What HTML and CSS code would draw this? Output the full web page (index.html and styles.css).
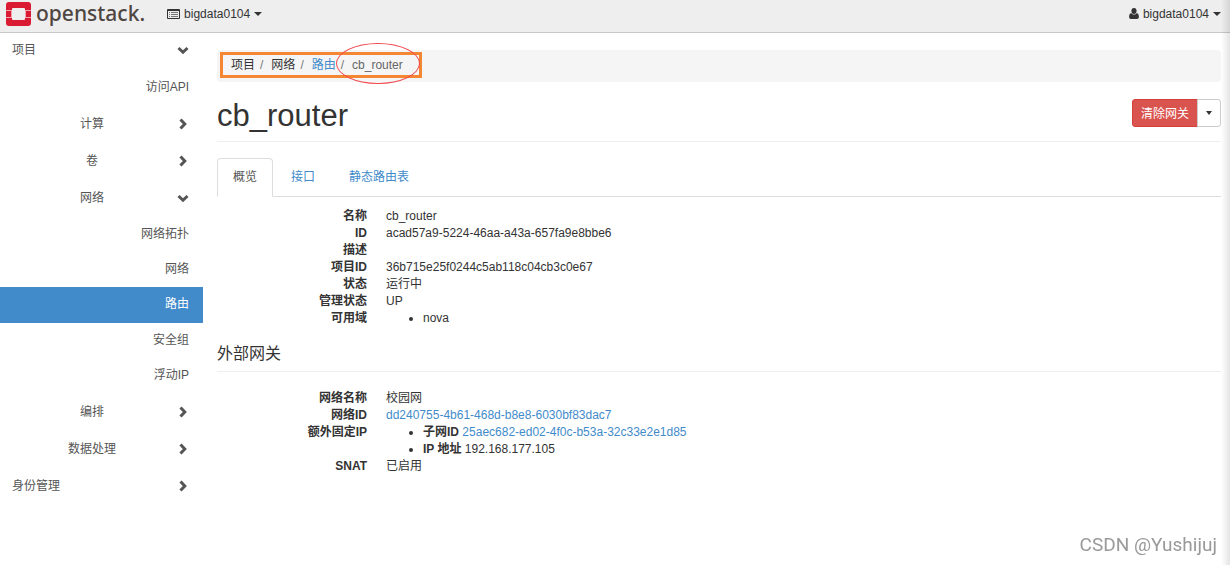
FILE: index.html
```
<!DOCTYPE html>
<html lang="zh-CN">
<head>
    <meta charset="UTF-8">
    <meta name="viewport" content="width=device-width, initial-scale=1.0">
    <title>cb_router - OpenStack Dashboard</title>
    <link rel="stylesheet" href="styles.css">
</head>
<body>
    <header class="topbar">
        <a class="brand" href="#">
            <svg class="brand-mark" viewBox="0 0 25 24" aria-hidden="true">
                <path fill="#da1a32" d="M3 0h19a3 3 0 0 1 3 3v5h-6V7a1 1 0 0 0-1-1H7a1 1 0 0 0-1 1v1H0V3a3 3 0 0 1 3-3z"/>
                <path fill="#da1a32" d="M0 16h6v1a1 1 0 0 0 1 1h11a1 1 0 0 0 1-1v-1h6v5a3 3 0 0 1-3 3H3a3 3 0 0 1-3-3z"/>
                <path fill="#da1a32" d="M0 9h6v6H0zM19 9h6v6h-6z"/>
                <path fill="#f3a3ae" d="M5 9h1v6H5zM19 9h1v6h-1zM0 8h6v1H0zM19 8h6v1h-6zM0 15h6v1H0zM19 15h6v1h-6z"/>
            </svg>
            <span class="brand-name">openstack.</span>
        </a>
        <button class="menu-button" type="button">
            <svg class="icon-list" viewBox="0 0 13 10" aria-hidden="true">
                <path fill="#333" fill-rule="evenodd" d="M1 0h11a1 1 0 0 1 1 1v8a1 1 0 0 1-1 1H1a1 1 0 0 1-1-1V1a1 1 0 0 1 1-1zM1 2v7h11V2z"/>
                <path fill="#777" d="M2 3h1v1H2zM4 3h7v1H4zM2 5h1v1H2zM4 5h7v1H4zM2 7h1v1H2zM4 7h7v1H4z"/>
            </svg>
            bigdata0104
            <span class="caret"></span>
        </button>
        <button class="menu-button user-menu" type="button">
            <svg class="icon-user" viewBox="0 0 10 11" aria-hidden="true">
                <path fill="#333" d="M5 0a2.600 2.900 0 0 1 2.600 2.900C7.600 4.700 6.500 6 5 6S2.400 4.700 2.400 2.900A2.600 2.900 0 0 1 5 0zM2.300 5C3 6 3.900 6.500 5 6.500S7 6 7.700 5C9.200 5.300 9.900 7 9.900 9c0 1.200-.8 2-1.800 2H1.900C.9 11 .1 10.200.1 9c0-2 .7-3.700 2.200-4z"/>
            </svg>
            bigdata0104
            <span class="caret"></span>
        </button>
    </header>

    <div class="layout">
        <nav class="sidebar">
            <a class="nav-root first" href="#"><span>项目</span>
                <svg class="chevron" viewBox="0 0 12 12"><path d="M1.500 4l4.500 4.300L10.500 4"/></svg></a>
            <div class="nav-leaves">
                <a href="#">访问API</a>
            </div>
            <a class="nav-group" href="#"><span>计算</span>
                <svg class="chevron" viewBox="0 0 12 12"><path d="M3.500 1.500L7.800 6 3.500 10.500"/></svg></a>
            <a class="nav-group" href="#"><span>卷</span>
                <svg class="chevron" viewBox="0 0 12 12"><path d="M3.500 1.500L7.800 6 3.500 10.500"/></svg></a>
            <a class="nav-group" href="#"><span>网络</span>
                <svg class="chevron" viewBox="0 0 12 12"><path d="M1.500 4l4.500 4.300L10.500 4"/></svg></a>
            <div class="nav-leaves">
                <a href="#">网络拓扑</a>
                <a href="#">网络</a>
                <a class="active" href="#">路由</a>
                <a href="#">安全组</a>
                <a href="#">浮动IP</a>
            </div>
            <a class="nav-group" href="#"><span>编排</span>
                <svg class="chevron" viewBox="0 0 12 12"><path d="M3.500 1.500L7.800 6 3.500 10.500"/></svg></a>
            <a class="nav-group" href="#"><span>数据处理</span>
                <svg class="chevron" viewBox="0 0 12 12"><path d="M3.500 1.500L7.800 6 3.500 10.500"/></svg></a>
            <a class="nav-root" href="#"><span>身份管理</span>
                <svg class="chevron" viewBox="0 0 12 12"><path d="M3.500 1.500L7.800 6 3.500 10.500"/></svg></a>
        </nav>

        <main class="content">
            <ol class="breadcrumb">
                <li>项目</li>
                <li>网络</li>
                <li><a href="#">路由</a></li>
                <li class="current">cb_router</li>
                <li class="mark-box" aria-hidden="true"></li>
                <li class="mark-ellipse" aria-hidden="true"></li>
            </ol>

            <div class="page-header">
                <h1>cb_router</h1>
                <div class="btn-group">
                    <button class="btn btn-danger" type="button">清除网关</button>
                    <button class="btn btn-toggle" type="button" aria-label="更多"><span class="caret small"></span></button>
                </div>
            </div>

            <div class="tabs">
                <a class="active" href="#">概览</a>
                <a href="#">接口</a>
                <a href="#">静态路由表</a>
            </div>

            <dl class="details">
                <dt>名称</dt>
                <dd>cb_router</dd>
                <dt>ID</dt>
                <dd>acad57a9-5224-46aa-a43a-657fa9e8bbe6</dd>
                <dt>描述</dt>
                <dd></dd>
                <dt>项目ID</dt>
                <dd>36b715e25f0244c5ab118c04cb3c0e67</dd>
                <dt>状态</dt>
                <dd>运行中</dd>
                <dt>管理状态</dt>
                <dd>UP</dd>
                <dt>可用域</dt>
                <dd>
                    <ul>
                        <li>nova</li>
                    </ul>
                </dd>
            </dl>

            <h4>外部网关</h4>
            <dl class="details">
                <dt>网络名称</dt>
                <dd>校园网</dd>
                <dt>网络ID</dt>
                <dd><a href="#">dd240755-4b61-468d-b8e8-6030bf83dac7</a></dd>
                <dt>额外固定IP</dt>
                <dd>
                    <ul>
                        <li><b>子网ID</b> <a href="#">25aec682-ed02-4f0c-b53a-32c33e2e1d85</a></li>
                        <li><b>IP 地址</b> 192.168.177.105</li>
                    </ul>
                </dd>
                <dt>SNAT</dt>
                <dd>已启用</dd>
            </dl>
        </main>
    </div>

    <div class="edge-shadow"></div>
    <div class="watermark">CSDN @Yushijuj</div>
</body>
</html>
```
FILE: styles.css
```
:root {
    --text: #333;
    --link: #428bca;
    --line: #ddd;
}
* {
    box-sizing: border-box;
}
body {
    margin: 0;
    min-height: 100vh;
    background: #fff;
    color: var(--text);
    font-family: "Liberation Sans", Arial, "Noto Sans CJK SC", sans-serif;
    font-size: 12px;
    line-height: 17px;
}
a {
    color: var(--link);
    text-decoration: none;
}
button {
    font-family: inherit;
    font-size: 12px;
    cursor: pointer;
}

/* top bar */
.topbar {
    display: flex;
    align-items: center;
    height: 33px;
    padding: 0 9px 5px 6px;
    background: #eee;
    border-bottom: 1px solid #c8c8c8;
}
.brand {
    display: flex;
    align-items: center;
    gap: 5px;
}
.brand-mark {
    width: 25px;
    height: 24px;
}
.brand-name {
    padding-bottom: 1px;
    color: #4f4642;
    font-family: "Noto Sans", "Open Sans", sans-serif;
    font-size: 21px;
    font-weight: 500;
    line-height: 26px;
}
.menu-button {
    display: flex;
    align-items: center;
    gap: 4px;
    margin-left: 22px;
    padding: 0;
    border: none;
    background: none;
    color: var(--text);
}
.user-menu {
    margin-left: auto;
}
.icon-list {
    width: 13px;
    height: 10px;
}
.icon-user {
    width: 10px;
    height: 11px;
}
.caret {
    border-top: 4px solid #333;
    border-left: 4px solid transparent;
    border-right: 4px solid transparent;
}
.caret.small {
    border-width: 4px 3px 0;
}

.layout {
    display: flex;
}

/* side navigation */
.sidebar {
    flex: 0 0 203px;
}
.sidebar a {
    color: #555;
    line-height: 18px;
}
.nav-root,
.nav-group {
    display: flex;
    align-items: center;
    gap: 5px;
    padding: 10px 14px 9px 12px;
}
.nav-root.first {
    padding: 8px 14px 10px 12px;
}
.nav-root span,
.nav-group span {
    flex: 1;
}
.nav-group span {
    text-align: center;
}
.chevron {
    width: 12px;
    height: 12px;
    fill: none;
    stroke: #555;
    stroke-width: 3;
}
.nav-leaves {
    padding-top: 1px;
}
.nav-leaves a {
    display: block;
    padding: 8px 14px 9px;
    text-align: right;
}
.nav-leaves a.active {
    padding-bottom: 10px;
    background: var(--link);
    color: #fff;
}

/* content */
.content {
    flex: 1;
    min-width: 0;
    padding: 17px 9px 0 14px;
}
.breadcrumb {
    position: relative;
    display: flex;
    height: 32px;
    margin: 0;
    padding: 7px 14px;
    border-radius: 4px;
    background: #f5f5f5;
    list-style: none;
}
.breadcrumb li + li:not([aria-hidden])::before {
    content: "/";
    padding: 0 8px 0 5px;
    color: #777;
}
.breadcrumb .current {
    color: #666;
}
/* hand-drawn marks over the breadcrumb */
.mark-box {
    position: absolute;
    left: 3px;
    top: 2px;
    width: 202px;
    height: 26px;
    border: 3px solid #f58634;
}
.mark-ellipse {
    position: absolute;
    left: 119px;
    top: -7px;
    width: 84px;
    height: 41px;
    border: 1px solid #f0484c;
    border-radius: 50%;
}

.page-header {
    display: flex;
    align-items: center;
    justify-content: space-between;
    height: 60px;
    border-bottom: 1px solid #eee;
}
h1 {
    margin: 8px 0 0;
    font-size: 31px;
    font-weight: normal;
    line-height: 34px;
}
.btn-group {
    display: flex;
    margin-top: 2px;
}
.btn {
    height: 28px;
    padding: 0 8px;
    border: 1px solid #ccc;
}
.btn-danger {
    border-color: #d43f3a;
    border-radius: 3px 0 0 3px;
    background: #d9534f;
    color: #fff;
}
.btn-toggle {
    display: flex;
    align-items: center;
    margin-left: -1px;
    border-radius: 0 3px 3px 0;
    background: #fff;
}

.tabs {
    display: flex;
    gap: 2px;
    margin-top: 16px;
    border-bottom: 1px solid var(--line);
}
.tabs a {
    margin-bottom: -1px;
    padding: 10px 15px;
    border: 1px solid transparent;
    border-radius: 4px 4px 0 0;
}
.tabs a.active {
    border-color: var(--line) var(--line) #fff;
    background: #fff;
    color: #555;
}

.details {
    display: grid;
    grid-template-columns: 150px 1fr;
    column-gap: 19px;
    margin: 11px 0 17px;
}
.details dt {
    font-weight: bold;
    text-align: right;
}
.details dd {
    margin: 0;
}
.details ul {
    margin: 0;
    padding-left: 37px;
}
h4 {
    margin: 0 0 18px;
    padding-bottom: 7px;
    border-bottom: 1px solid #eee;
    font-size: 16px;
    font-weight: normal;
    line-height: 20px;
}

.edge-shadow {
    position: fixed;
    top: 0;
    right: 0;
    bottom: 0;
    width: 9px;
    background: linear-gradient(to right, rgba(0, 0, 0, 0), rgba(0, 0, 0, 0.1));
}
.watermark {
    position: fixed;
    right: 13px;
    bottom: 8px;
    color: #999;
    font-family: Roboto, sans-serif;
    font-size: 19px;
    line-height: 24px;
}
```
